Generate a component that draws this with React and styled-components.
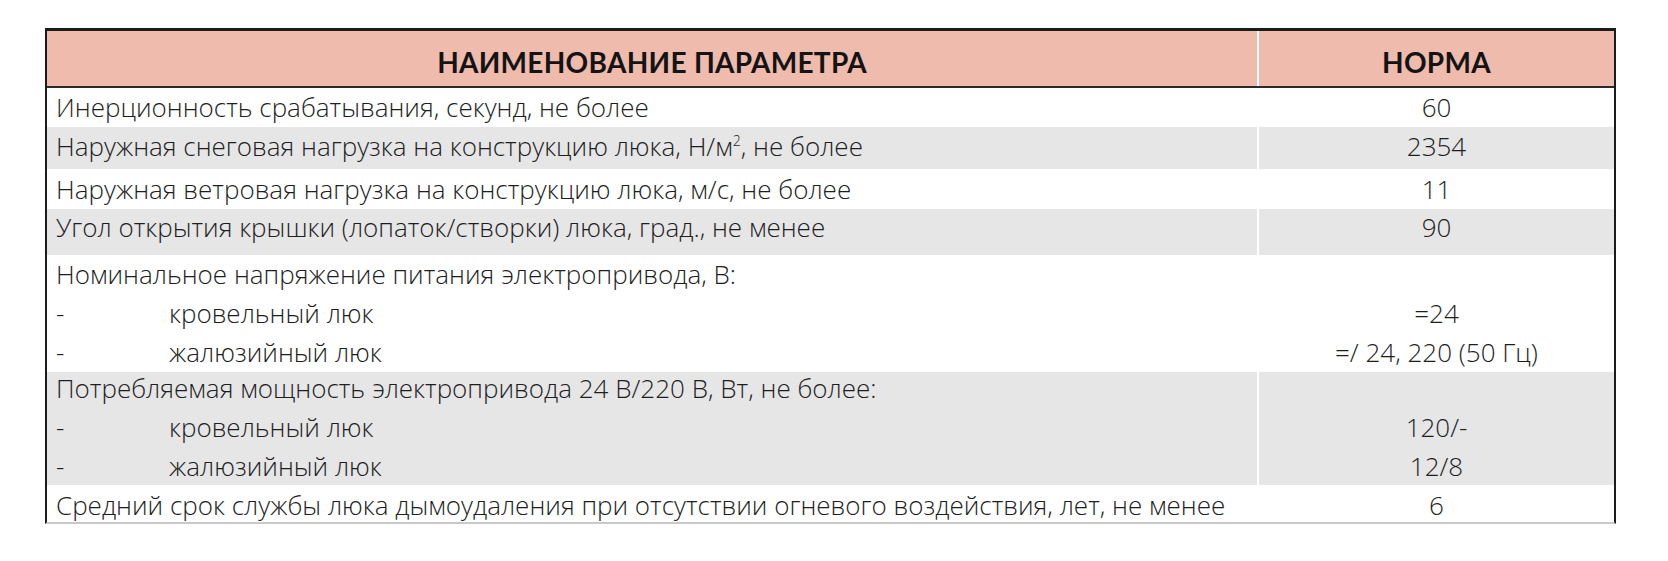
import React from 'react';
import styled, { createGlobalStyle } from 'styled-components';

const GlobalStyle = createGlobalStyle`
    html, body {
        margin: 0;
        padding: 0;
        background: #ffffff;
    }
`;

const Page = styled.div`
    padding: 28px 0 0 45px;
`;

const Table = styled.div`
    width: 1567px;
    border-top: 3px solid #1b1b1b;
    border-left: 2px solid #1b1b1b;
    border-right: 2px solid #1b1b1b;
    border-bottom: 2px solid #c9c9c9;
    background: #ffffff;
    font-family: "Open Sans", "Noto Sans", sans-serif;
    color: #1e1e1e;
`;

const HeadRow = styled.div`
    display: grid;
    grid-template-columns: 1210px 1fr;
    column-gap: 2px;
    height: 55px;
    border-bottom: 2px solid #2a2a2a;
`;

const HeadCell = styled.div`
    display: flex;
    align-items: center;
    justify-content: center;
    padding-top: 6px;
    background: #efbbac;
    font-family: "Lato", "Open Sans", sans-serif;
    font-weight: 700;
    font-size: 28px;
    letter-spacing: 0.3px;
    color: #141414;
`;

const Row = styled.div`
    display: grid;
    grid-template-columns: 1210px 1fr;
    column-gap: 2px;
    height: ${p => p.$h}px;
`;

const Cell = styled.div`
    display: flex;
    flex-direction: column;
    gap: 9px;
    padding-top: ${p => p.$pt}px;
    padding-left: ${p => (p.$center ? 0 : 9)}px;
    align-items: ${p => (p.$center ? 'center' : 'flex-start')};
    background: ${p => (p.$shade ? '#e6e6e7' : '#ffffff')};
`;

const Line = styled.div`
    font-size: 26px;
    font-weight: 300;
    line-height: 30px;
    height: 30px;
    white-space: nowrap;
`;

const Sup = styled.sup`
    font-size: 14px;
    line-height: 0;
`;

const Item = styled.div`
    display: grid;
    grid-template-columns: 113px auto;
    font-size: 26px;
    font-weight: 300;
    line-height: 30px;
    height: 30px;
    white-space: nowrap;
`;

const rows = [
    { h: 39, pt: 4, name: ['Инерционность срабатывания, секунд, не более'], value: ['60'] },
    {
        h: 42, pt: 4, shade: true,
        name: [<>Наружная снеговая нагрузка на конструкцию люка, Н/м<Sup>2</Sup>, не более</>],
        value: ['2354'],
    },
    { h: 40, pt: 5, name: ['Наружная ветровая нагрузка на конструкцию люка, м/с, не более'], value: ['11'] },
    { h: 46, pt: 3, shade: true, name: ['Угол открытия крышки (лопаток/створки) люка, град., не менее'], value: ['90'] },
    {
        h: 117, pt: 4,
        name: ['Номинальное напряжение питания электропривода, В:'],
        items: ['кровельный люк', 'жалюзийный люк'],
        value: ['\u00a0', '=24', '=/ 24, 220 (50 Гц)'],
    },
    {
        h: 113, pt: 1, shade: true,
        name: ['Потребляемая мощность электропривода 24 В/220 В, Вт, не более:'],
        items: ['кровельный люк', 'жалюзийный люк'],
        value: ['\u00a0', '120/-', '12/8'],
    },
    {
        h: 37, pt: 5,
        name: ['Средний срок службы люка дымоудаления при отсутствии огневого воздействия, лет, не менее'],
        value: ['6'],
    },
];

export default function App() {
    return (
        <Page>
            <GlobalStyle />
            <Table>
                <HeadRow>
                    <HeadCell>НАИМЕНОВАНИЕ ПАРАМЕТРА</HeadCell>
                    <HeadCell>НОРМА</HeadCell>
                </HeadRow>
                {rows.map((r, i) => (
                    <Row key={i} $h={r.h}>
                        <Cell $pt={r.pt} $shade={r.shade}>
                            {r.name.map((t, j) => <Line key={j}>{t}</Line>)}
                            {(r.items || []).map((t, j) => (
                                <Item key={'i' + j}>
                                    <span>-</span>
                                    <span>{t}</span>
                                </Item>
                            ))}
                        </Cell>
                        <Cell $pt={r.pt} $shade={r.shade} $center>
                            {r.value.map((t, j) => <Line key={j}>{t}</Line>)}
                        </Cell>
                    </Row>
                ))}
            </Table>
        </Page>
    );
}
